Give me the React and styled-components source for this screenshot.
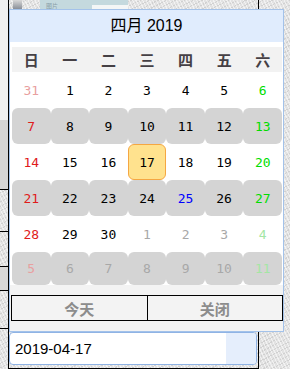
import React from "react";
import styled, { createGlobalStyle } from "styled-components";

const GlobalStyle = createGlobalStyle`
  html, body {
    margin: 0;
    padding: 0;
  }
  body {
    width: 290px;
    height: 369px;
    overflow: hidden;
    font-family: "Liberation Sans", "Noto Sans CJK SC", sans-serif;
  }
`;

const texture = `
  background-color: #e2e2e2;
  background-image:
    repeating-linear-gradient(63deg, rgba(255, 255, 255, 0.55) 0 1px, transparent 1px 3px),
    repeating-linear-gradient(-27deg, rgba(0, 0, 0, 0.08) 0 1px, transparent 1px 4px);
`;

const WEEK = ["日", "一", "二", "三", "四", "五", "六"];

function buildDays() {
  const cells = [{ n: 31, cur: false }];
  for (let d = 1; d <= 30; d++) cells.push({ n: d, cur: true });
  for (let d = 1; cells.length < 42; d++) cells.push({ n: d, cur: false });
  return cells;
}

function toneOf(cell, dow) {
  if (!cell.cur) {
    if (dow === 0) return "#e8a0a0";
    if (dow === 6) return "#a4e6a4";
    return "#a8a8a8";
  }
  if (cell.n === 25) return "#0000ff";
  if (dow === 0) return "#e01b1b";
  if (dow === 6) return "#00dd00";
  return "#000";
}

export default function App() {
  const days = buildDays();

  return (
    <>
      <GlobalStyle />
      <Page>
        <LeftRail>
          <RailCell $h={120} $tone="#f0f0f0" />
          <RailCell $h={70} $tone="#d5d5d5" $line />
          <RailCell $h={42} $line />
          <RailCell $h={35} $line />
          <RailCell $h={24} $tone="#d8d8d8" $line />
          <RailCell $h={38} $line />
          <RailCell $h={40} />
        </LeftRail>

        <MainCol>
          <TopThumbs>
            <ScrollThumb />
            <Picture>
              <PicCaption>图片</PicCaption>
              <PicBox />
            </Picture>
          </TopThumbs>

          <FieldWrap>
            <Popup>
              <MonthHeader>四月 2019</MonthHeader>
              <WeekRow>
                {WEEK.map((w) => (
                  <WeekDay key={w}>{w}</WeekDay>
                ))}
              </WeekRow>
              <DayGrid>
                {days.map((cell, i) => {
                  const row = Math.floor(i / 7);
                  const dow = i % 7;
                  return (
                    <DayCell
                      key={i}
                      $shade={row % 2 === 1}
                      $selected={cell.cur && cell.n === 17}
                      $tone={toneOf(cell, dow)}
                    >
                      {cell.n}
                    </DayCell>
                  );
                })}
              </DayGrid>
              <Footer>
                <FooterButton>今天</FooterButton>
                <FooterButton>关闭</FooterButton>
              </Footer>
            </Popup>

            <DateInput defaultValue="2019-04-17" />
            <Trigger />
          </FieldWrap>
        </MainCol>

        <RightCol />
      </Page>
    </>
  );
}

const Page = styled.div`
  width: 290px;
  height: 369px;
  overflow: hidden;
  display: grid;
  grid-template-columns: 9px 250px 1fr;
  ${texture}
`;

const LeftRail = styled.div`
  display: flex;
  flex-direction: column;
  border-right: 1px solid #000;
`;

const RailCell = styled.div`
  flex: 0 0 ${(p) => p.$h}px;
  box-sizing: border-box;
  ${(p) => (p.$tone ? `background: ${p.$tone};` : "")}
  ${(p) => (p.$line ? "border-bottom: 1px solid #000;" : "")}
`;

const MainCol = styled.div`
  display: flex;
  flex-direction: column;
  border-right: 1px solid #000;
  padding-bottom: 3px;
  box-sizing: border-box;
  border-bottom: 1px solid #000;
`;

const TopThumbs = styled.div`
  height: 9px;
  display: flex;
  align-items: stretch;
  gap: 18px;
  padding-left: 4px;
`;

const ScrollThumb = styled.div`
  width: 9px;
  background: linear-gradient(180deg, #d8d8d8, #8a8f98);
`;

const Picture = styled.div`
  width: 88px;
  display: flex;
  align-items: flex-end;
  justify-content: space-between;
  background: #c4d9de;
`;

const PicCaption = styled.span`
  font-size: 6px;
  color: #8aa0a8;
  padding-left: 6px;
  line-height: 6px;
`;

const PicBox = styled.div`
  width: 36px;
  height: 4px;
  background: #f4f6f6;
`;

const FieldWrap = styled.div`
  position: relative;
  margin-top: auto;
  margin-right: 1px;
  height: 33px;
  box-sizing: border-box;
  display: flex;
  border: 1px solid #8fb3e4;
  border-radius: 4px;
  background: #fff;
  overflow: visible;
`;

const DateInput = styled.input`
  flex: 1;
  min-width: 0;
  border: none;
  outline: none;
  background: transparent;
  padding: 0 0 0 5px;
  font-family: "Liberation Sans", sans-serif;
  font-size: 15px;
  color: #000;
  border-radius: 4px 0 0 4px;
`;

const Trigger = styled.div`
  width: 30px;
  background: #e5eefc;
  border-radius: 0 3px 3px 0;
`;

const Popup = styled.div`
  position: absolute;
  left: -1px;
  bottom: calc(100% + 1px);
  width: 275px;
  box-sizing: border-box;
  border: 1px solid #a3c2ea;
  background: #fff;
  display: flex;
  flex-direction: column;
  z-index: 2;
`;

const MonthHeader = styled.div`
  height: 32px;
  display: flex;
  align-items: center;
  justify-content: center;
  background: #e0ecfd;
  font-family: "Liberation Sans", "Noto Sans CJK SC", sans-serif;
  font-size: 16px;
  line-height: 1;
  color: #000;
  margin-bottom: 5px;
`;

const WeekRow = styled.div`
  height: 25px;
  margin: 0 1px 0 2px;
  display: grid;
  grid-template-columns: repeat(7, 1fr);
  background: #f2f2f2;
`;

const WeekDay = styled.div`
  display: flex;
  align-items: center;
  justify-content: center;
  font-family: "Noto Sans CJK SC", sans-serif;
  font-weight: 700;
  font-size: 15px;
  line-height: 1;
  color: #454045;
`;

const DayGrid = styled.div`
  margin: 0 1px 0 2px;
  display: grid;
  grid-template-columns: repeat(7, 1fr);
  grid-template-rows: repeat(5, 36px) 33px;
`;

const DayCell = styled.div`
  display: flex;
  align-items: center;
  justify-content: center;
  box-sizing: border-box;
  border-radius: 6px;
  font-family: "DejaVu Sans Mono", monospace;
  font-size: 13px;
  line-height: 1;
  color: ${(p) => p.$tone};
  background: ${(p) =>
    p.$selected ? "#ffe28e" : p.$shade ? "#d4d4d4" : "transparent"};
  border: ${(p) => (p.$selected ? "1px solid #f5a742" : "none")};
`;

const Footer = styled.div`
  height: 46px;
  box-sizing: border-box;
  padding: 10px 0 10px 1px;
  display: flex;
  background: #f3f3f3;
`;

const FooterButton = styled.button`
  flex: 1;
  height: 26px;
  margin: 0;
  padding: 0;
  border: 1px solid #000;
  background: #f3f3f3;
  font-family: "Noto Sans CJK SC", sans-serif;
  font-weight: 700;
  font-size: 15px;
  line-height: 1;
  color: #8c8c8c;

  & + & {
    margin-left: -1px;
  }
`;

const RightCol = styled.div``;
